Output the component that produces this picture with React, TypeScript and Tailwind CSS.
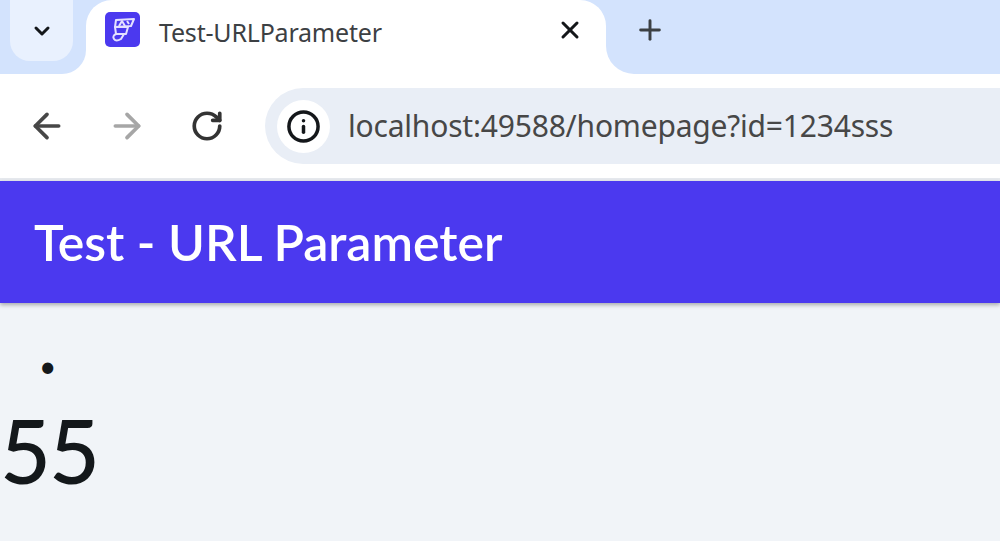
import { ArrowLeft, ArrowRight, ChevronDown, Info, Plus, RotateCw, X } from 'lucide-react';

function Favicon() {
  return (
    <div className="w-[35px] h-[35px] rounded-[5px] bg-[#4b39ef] flex items-center justify-center">
      <svg width="30" height="30" viewBox="0 0 30 30" fill="none" stroke="#e4e0ff" strokeWidth="2" strokeLinejoin="round">
        <path d="M8 5 L26 4 L23 11 L7 12 Z" />
        <path d="M11 11 L14 6 L17 11 M19 6 L21 9" />
        <path d="M7 12 L20 12 L18 19 L8 19 Z" />
        <path d="M8 19 L16 19 L13 24 Q8 27 6 24 Q4 21 8 19 Z" />
      </svg>
    </div>
  );
}

function TabStrip() {
  return (
    <div className="flex h-[74px] bg-white">
      {/* tab search button */}
      <div className="w-[86px] bg-[#d3e3fd] rounded-br-[24px] pl-[10px]">
        <div className="w-[63px] h-[61px] rounded-b-[20px] bg-[#e9f1fe] flex items-center justify-center">
          <ChevronDown size={24} strokeWidth={3} className="text-[#14171a]" />
        </div>
      </div>
      {/* active tab */}
      <div className="w-[520px] bg-[#d3e3fd]">
        <div className="h-full bg-white rounded-t-[26px] flex items-start pl-[19px] pt-[12px]">
          <Favicon />
          <span className="ml-[19px] mt-[3px] text-[25px] leading-[34px] text-[#3c4043] font-['Noto_Sans',sans-serif] tracking-[-0.2px]">
            Test-URLParameter
          </span>
          <X size={28} strokeWidth={2.6} className="ml-auto mr-[22px] mt-[4px] text-[#14171a]" />
        </div>
      </div>
      {/* new tab + empty strip */}
      <div className="flex-1 bg-[#d3e3fd] rounded-bl-[28px] pl-[28px] pt-[14px]">
        <Plus size={32} strokeWidth={2.2} className="text-[#3c4043]" />
      </div>
    </div>
  );
}

function Toolbar() {
  return (
    <div className="h-[107px] bg-white flex items-center border-b-[3px] border-[#e6e9ee]">
      <div className="flex items-center pl-[27px]">
        <ArrowLeft size={40} strokeWidth={2.2} className="text-[#474747]" />
        <ArrowRight size={40} strokeWidth={2.2} className="ml-[40px] text-[#a6a6a6]" />
        <RotateCw size={34} strokeWidth={2.6} className="ml-[43px] text-[#333333]" />
      </div>
      <div className="ml-[41px] flex-1 h-[76px] rounded-l-[38px] bg-[#e9eef6] flex items-center pl-[12px]">
        <div className="w-[53px] h-[53px] rounded-full bg-white flex items-center justify-center">
          <Info size={35} strokeWidth={2.4} className="text-[#14171a]" />
        </div>
        <span className="ml-[18px] text-[30px] leading-[40px] text-[#474747] font-['Noto_Sans',sans-serif] tracking-[-0.2px]">
          localhost:49588/homepage?id=1234sss
        </span>
      </div>
    </div>
  );
}

export default function App() {
  return (
    <div className="h-[541px] w-[1000px] overflow-hidden bg-[#f1f4f8]">
      <TabStrip />
      <Toolbar />
      <div className="h-[122px] bg-[#4b39ef] flex items-center pl-[34px] shadow-[0_2px_4px_rgba(0,0,0,0.3)] relative">
        <h1 className="text-[50px] leading-[60px] text-white font-['Lato',sans-serif] font-semibold">
          Test - URL Parameter
        </h1>
      </div>
      <div className="pl-[39px] pt-[40px] text-[#14181b] font-['Lato',sans-serif] text-[30px] leading-[44px]">
        •
      </div>
      <div className="mt-[13px] text-[#14181b] font-['Lato',sans-serif] font-medium text-[88px] leading-[100px] tracking-[-2px]">
        55
      </div>
    </div>
  );
}
